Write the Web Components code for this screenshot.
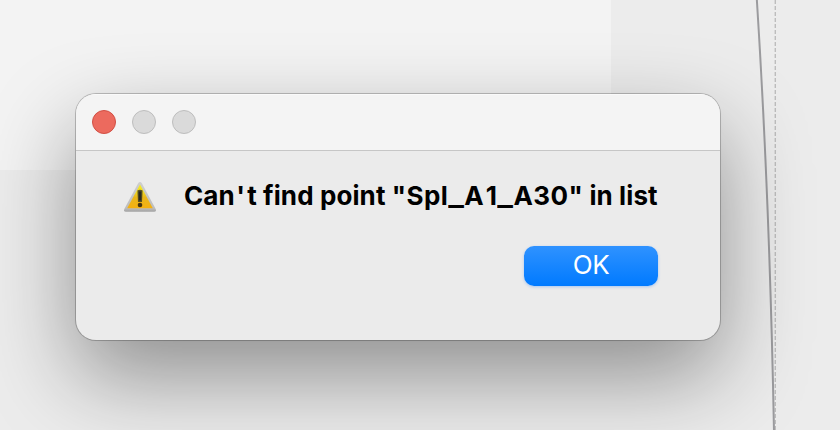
<!DOCTYPE html>
<html lang="en">
<head>
<meta charset="utf-8">
<title>Alert</title>
<style>
html,body{margin:0;height:100%;overflow:hidden}
body{font-family:Inter,"Liberation Sans",sans-serif}
.mark{letter-spacing:2.1px}
.name{letter-spacing:.4px}
.bar{display:inline-block;letter-spacing:0;margin:0 1.9px;transform:scaleX(1.27)}
.one{margin-left:1.5px}
</style>
</head>
<body>
<drawing-canvas>
  <alert-window>
    <window-controls slot="controls"></window-controls>
    <warning-icon slot="icon"></warning-icon>
    <span slot="message">Ca<span class="mark">n'</span>t find point <span class="name">"Spl<span class="bar">_</span>A<span class="one">1</span><span class="bar">_</span>A30"</span> in list</span>
    <push-button slot="action">OK</push-button>
  </alert-window>
</drawing-canvas>
<script>
function define(name, html) {
  const template = document.createElement('template');
  template.innerHTML = html;
  customElements.define(name, class extends HTMLElement {
    constructor() {
      super();
      this.attachShadow({mode: 'open'}).append(template.content.cloneNode(true));
    }
  });
}

define('drawing-canvas', `
<style>
:host{display:block;position:relative;box-sizing:border-box;width:840px;height:430px;padding:94px 120px 90px 76px;overflow:hidden;background:linear-gradient(#f3f3f3,#f3f3f3) 0 0/611px 170px no-repeat #ececec}
svg{position:absolute;left:0;top:0}
</style>
<svg width="840" height="430" fill="none">
  <path d="M775.3 0V430" stroke="#bdbdbd" stroke-width="1.4" stroke-dasharray="4 2"/>
  <path d="M756.8 -1Q769.5 198 774 431" stroke="#9b9b9e" stroke-width="2"/>
</svg>
<slot></slot>`);

define('alert-window', `
<style>
:host{display:flex;flex-direction:column;position:relative;box-sizing:border-box;width:644px;height:246px;border-radius:20px;background:#ebebeb;overflow:hidden;box-shadow:0 0 0 1px rgba(0,0,0,.2),0 0 2px rgba(0,0,0,.1),0 36px 88px rgba(0,0,0,.4)}
header{box-sizing:border-box;height:57px;padding:16px;background:#f4f4f4;border-bottom:1px solid #c6c6c6;box-shadow:inset 0 1px #fafafa}
main{display:grid;grid-template-columns:32px 1fr;column-gap:28px;padding:29px 0 0 48px}
.message{height:32px;font-weight:700;font-size:26px;line-height:32px;letter-spacing:.1px;color:#000;white-space:nowrap}
.action{grid-column:1/-1;padding:34px 62px 0 0;display:flex;justify-content:flex-end}
</style>
<header><slot name="controls"></slot></header>
<main><slot name="icon"></slot><div class="message"><slot name="message"></slot></div><div class="action"><slot name="action"></slot></div></main>`);

define('window-controls', `
<style>
:host{display:flex;gap:16px}
i{box-sizing:border-box;width:24px;height:24px;border-radius:50%;background:#dadada;border:1px solid #bdbdbd}
.close{background:#ec6a5e;border-color:#d14f44}
</style><i class="close"></i><i></i><i></i>`);

define('warning-icon', `
<style>:host{display:block;width:32px;height:32px}svg{display:block}</style>
<svg width="32" height="32" viewBox="0 0 32 32">
  <defs>
    <linearGradient id="y" x1="0" y1="0" x2="0" y2="1"><stop stop-color="#f7ee20"/><stop offset=".3" stop-color="#f0dc24"/><stop offset=".55" stop-color="#e9b71c"/><stop offset="1" stop-color="#f5b010"/></linearGradient>
    <linearGradient id="g" x1="0" y1="0" x2="0" y2="1"><stop stop-color="#cfcfcf"/><stop offset=".88" stop-color="#bdbdbd"/><stop offset="1" stop-color="#a2a2a2"/></linearGradient>
  </defs>
  <path d="M14 3.4Q16 .8 18 3.4L31.7 29Q32.6 31.6 30 31.8H2Q-.6 31.6.3 29Z" fill="url(#g)"/>
  <path d="M16 4.5L28.8 28.2H3.2Z" fill="url(#y)"/>
  <path d="M13.4 10.6Q16 9 18.6 10.6L18 22H14Z" fill="#5a5120"/>
  <path d="M14.8 11.5H17.2V20.5H14.8Z" fill="#292923"/>
  <circle cx="16" cy="25" r="2.3" fill="#46340f"/>
</svg>`);

define('push-button', `
<style>
:host{display:block;box-sizing:border-box;width:134px;height:40px;border-radius:10px;background:linear-gradient(#2f92ff,#007aff);box-shadow:0 1px 3px rgba(0,110,255,.3);color:#fff;font-size:26px;line-height:38px;letter-spacing:-.5px;text-align:center}
</style><slot></slot>`);
</script>
</body>
</html>
